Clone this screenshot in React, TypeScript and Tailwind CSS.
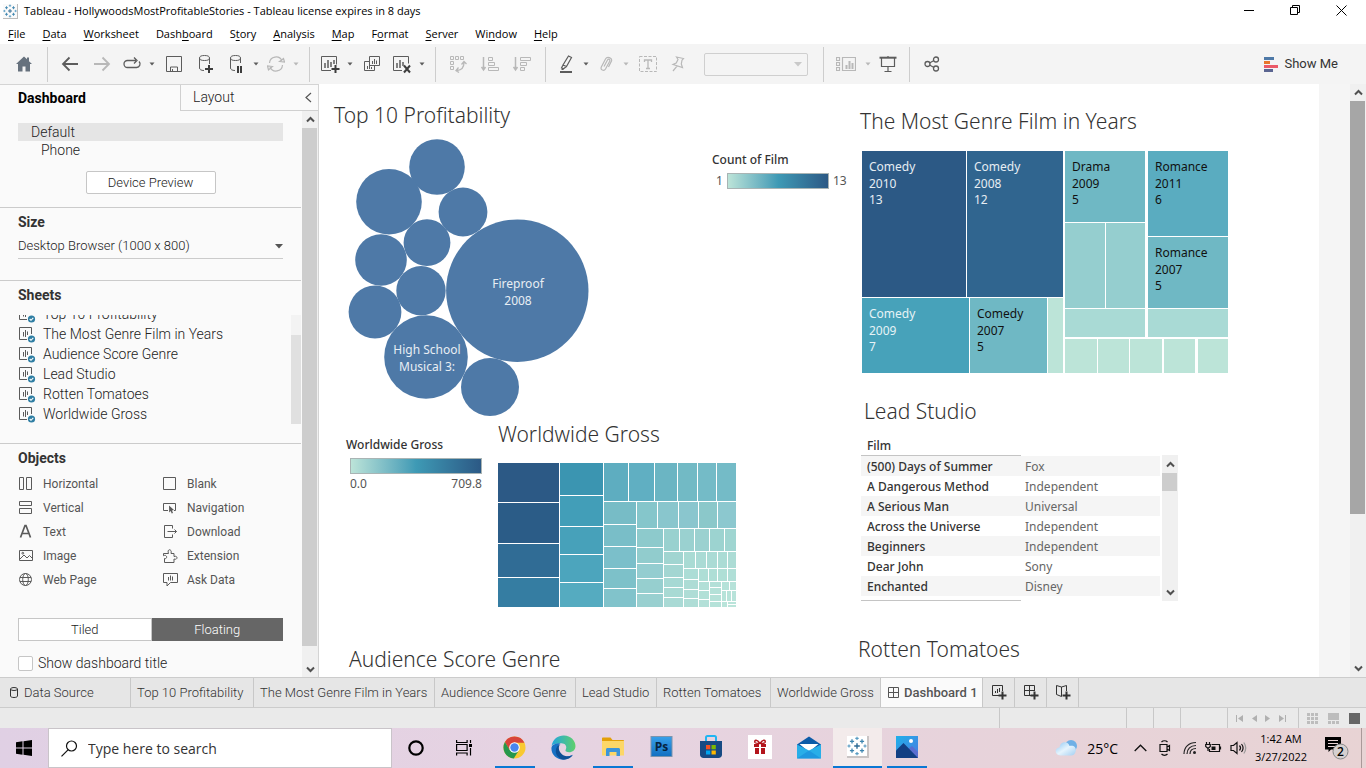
import React from 'react';
import type { ReactNode } from 'react';

const VIZ = "font-['Noto_Sans',sans-serif]";
const UI = "font-['Roboto',sans-serif]";
const SYS = "font-['Open_Sans',sans-serif]";

type Rect = [number, number, number, number, string];

/* ---------- small drawing helpers ---------- */

function Svg({ w = 20, h = 20, children, className = '' }: { w?: number; h?: number; children: ReactNode; className?: string }) {
  return (
    <svg width={w} height={h} viewBox={`0 0 ${w} ${h}`} fill="none" stroke="currentColor" strokeWidth="1" className={`shrink-0 ${className}`} aria-hidden="true">
      {children}
    </svg>
  );
}

const Caret = () => (
  <Svg w={6} h={4}>
    <path d="M0.500 0.500h5L3 3.500z" fill="currentColor" stroke="none" />
  </Svg>
);

function TableauMark({ size = 16 }: { size?: number }) {
  const plus = (x: number, y: number, r: number) => `M${x - r} ${y}h${2 * r}M${x} ${y - r}v${2 * r}`;
  return (
    <svg width={size} height={size} viewBox="0 0 20 20" fill="none" aria-hidden="true" className="shrink-0">
      <path d={plus(10, 10, 2.8)} stroke="#2d6a94" strokeWidth="1.4" />
      <path d={plus(5, 5.300, 2.100) + plus(15, 5.300, 2.100) + plus(5, 14.700, 2.100) + plus(15, 14.700, 2.100)} stroke="#3f86b0" strokeWidth="1.300" />
      <path d={plus(10, 2.400, 1.700) + plus(10, 17.600, 1.700) + plus(2, 10, 1.600) + plus(18, 10, 1.600)} stroke="#5a9cc2" strokeWidth="1.200" />
    </svg>
  );
}

/* ---------- toolbar ---------- */

function Tool({ label, wide = true, dim = false, children }: { label: string; wide?: boolean; dim?: boolean; children: ReactNode }) {
  return (
    <button aria-label={label} className={`flex h-8 shrink-0 items-center justify-center ${wide ? 'w-8' : 'w-7'} ${dim ? 'text-[#b8b8b8]' : 'text-[#5c5c5c]'}`}>
      {children}
    </button>
  );
}

const Drop = ({ label, dim = false }: { label: string; dim?: boolean }) => (
  <button aria-label={label} className={`flex h-8 w-3 shrink-0 items-center justify-center ${dim ? 'text-[#b8b8b8]' : 'text-[#5c5c5c]'}`}>
    <Caret />
  </button>
);

const Sep = () => <span className="ml-[7px] mr-1.5 h-[35px] w-px shrink-0 bg-[#cdcdcd]" />;

function Toolbar() {
  return (
    <div className="flex h-10 shrink-0 items-center bg-[#f4f4f4] pl-2 pr-7">
      <Tool label="Start page">
        <Svg w={18} h={18}>
          <path d="M9 1.500L1 9h2v7.500h4.500v-5h3v5H15V9h2l-3-2.800V2.500h-2v1.800z" fill="#66717d" stroke="none" />
        </Svg>
      </Tool>
      <Sep />
      <Tool label="Undo"><Svg w={18} h={16}><path d="M17 8H2M8.500 1.500L2 8l6.500 6.500" strokeWidth="1.800" /></Svg></Tool>
      <Tool label="Redo" dim><Svg w={18} h={16}><path d="M1 8h15M9.500 1.500L16 8l-6.500 6.500" strokeWidth="1.800" /></Svg></Tool>
      <Tool label="Replay" wide={false}>
        <Svg w={20} h={14}><path d="M9 3.500H5.500a3.500 3.500 0 0 0 0 7h9a3.500 3.500 0 0 0 2.500-6M7 3.500h7M12 0.500l3 3-3 3" strokeWidth="1.300" /></Svg>
      </Tool>
      <Drop label="Replay options" />
      <Tool label="Save"><Svg w={16} h={16}><path d="M.5.5h15v15H.5zM4.500 15.500v-4.500h7v4.500M6.500 13v2" /></Svg></Tool>
      <Tool label="New data source">
        <Svg w={18} h={20}>
          <ellipse cx="7.500" cy="4" rx="5" ry="2.500" /><path d="M2.500 4v10c0 1.400 1.500 2.500 4.500 2.500M12.500 4v6" /><path d="M12 11v8M8 15h8" strokeWidth="2" stroke="#3d3d3d" />
        </Svg>
      </Tool>
      <Tool label="Pause auto updates" wide={false}>
        <Svg w={18} h={20}>
          <ellipse cx="8.500" cy="4" rx="5" ry="2.500" /><path d="M3.500 4v10c0 1.400 1.500 2.500 4.500 2.500M13.500 4v5" /><path d="M11 12v7M14 12v7" strokeWidth="2" stroke="#3d3d3d" />
        </Svg>
      </Tool>
      <Drop label="Update options" />
      <Tool label="Run update" wide={false} dim>
        <Svg w={18} h={16}><path d="M2.500 7a6.500 6.500 0 0 1 12.500-2M15.500 9A6.500 6.500 0 0 1 3 11M12.500 5.500l5 .5-1-3.500zM5.500 10.500L.5 10l1 4z" strokeWidth="1.200" /></Svg>
      </Tool>
      <Drop label="Run options" dim />
      <Sep />
      <Tool label="New worksheet" wide={false}>
        <Svg w={20} h={20}>
          <path d="M11 16.500H1.500v-14h15v8" /><path d="M5 9v5M8 6v8M11 8v5M14 6v4" strokeWidth="1.500" /><path d="M15.500 11v8M11.500 15h8" strokeWidth="2" stroke="#3d3d3d" />
        </Svg>
      </Tool>
      <Drop label="New options" />
      <Tool label="Duplicate">
        <Svg w={18} h={18}>
          <path d="M6.500 1.500h10v9h-10zM6.500 6.500h-5v9h10v-5" /><path d="M9.500 6v3M11.500 4v5M13.500 5.500V9M4.500 11v3M6.500 9.500V14M8.500 12v2" />
        </Svg>
      </Tool>
      <Tool label="Clear sheet" wide={false}>
        <Svg w={20} h={20}>
          <path d="M10 16.500H1.500v-14h15v7" /><path d="M5 9v5M8 6v8M11 8v4" strokeWidth="1.500" /><path d="M12 11.500l6 7M18 11.500l-6 7" strokeWidth="2" stroke="#3d3d3d" />
        </Svg>
      </Tool>
      <Drop label="Clear options" />
      <Sep />
      <Tool label="Swap rows and columns" dim>
        <Svg w={18} h={18}>
          <path d="M1.500 1.500h3v3h-3zM6.500 1.500h3v3h-3zM11.500 1.500h3v3h-3zM1.500 6.500h3v3h-3zM1.500 11.500h3v3h-3z" /><path d="M15 7.500c0 5-2 7.500-7 8M12.500 9.500L15 6.500l2.500 2.500M9.500 12.500L7 15.500l3 2" strokeWidth="1.300" />
        </Svg>
      </Tool>
      <Tool label="Sort ascending" dim>
        <Svg w={18} h={16}><path d="M2.500 1v12M.5 11l2 3 2-3" strokeWidth="1.500" /><path d="M7.500 1.500h4v3h-4zM7.500 6.500h6v3h-6zM7.500 11.500h10v3h-10z" /></Svg>
      </Tool>
      <Tool label="Sort descending" dim>
        <Svg w={18} h={16}><path d="M2.500 1v12M.5 11l2 3 2-3" strokeWidth="1.500" /><path d="M7.500 1.500h10v3h-10zM7.500 6.500h6v3h-6zM7.500 11.500h4v3h-4z" /></Svg>
      </Tool>
      <Sep />
      <Tool label="Highlight" wide={false}>
        <Svg w={14} h={18}><path d="M9.500 1l3 1.500-5 9-3.500-1.500zM4 10l-1.500 3 2 .8L7.500 11.500M2.500 14.500h2" strokeWidth="1.200" /><path d="M1 17h12" strokeWidth="2" /></Svg>
      </Tool>
      <Drop label="Highlight options" />
      <Tool label="Group members" wide={false} dim>
        <Svg w={14} h={16}><path d="M5 10.500l3.500-6.500c.8-1.500 3-.5 2.200 1.200L6.500 13c-1.500 2.500-5.500 1-4.200-2L6.500 3c1.500-3 7-1.500 6 2L9.500 11" strokeWidth="1.200" /></Svg>
      </Tool>
      <Drop label="Group options" dim />
      <Tool label="Show mark labels" dim>
        <Svg w={18} h={16}><path d="M.5.5h17v15H.5z" strokeDasharray="3 1.500" /><path d="M5.500 6V4h7v2M9 4v8.500M7 12.500h4" strokeWidth="1.300" /></Svg>
      </Tool>
      <Tool label="Fix axes" wide={false} dim>
        <Svg w={14} h={16}><path d="M5.500 1l7 1.500-1.500 1.700-.7 3.800 1.200 3.500L2 8.500l3.200-1.500L7 3.500zM6 10.200L2 15" strokeWidth="1.200" /></Svg>
      </Tool>
      <div className="relative ml-3 flex shrink-0 items-center text-[#c9c9c9]">
        <select aria-label="Fit" disabled className="h-[23px] w-[104px] appearance-none rounded-xs border border-[#cfcfcf] bg-[#f4f4f4]" />
        <svg width="8" height="5" className="pointer-events-none absolute right-1.5" aria-hidden="true"><path d="M0 0h8L4 4.500z" fill="currentColor" /></svg>
      </div>
      <span className="w-2 shrink-0" />
      <Sep />
      <Tool label="Show cards" dim>
        <Svg w={20} h={16}><path d="M.5 1.500h3v3h-3zM.5 6.500h3v3h-3zM.5 11.500h3v3h-3zM6.500 1.500h13v13h-13z" strokeWidth="1.200" /><path d="M10.500 9v4M13.500 5v8M16.500 7v6" strokeWidth="2" /></Svg>
      </Tool>
      <Drop label="Card options" dim />
      <Tool label="Presentation mode" wide={false}>
        <Svg w={18} h={16}><path d="M.5 1.700h17" strokeWidth="2" /><path d="M2.500 2v8.500h13V2M9 10.500v4.500M5.500 15.500h7M9 0v1" strokeWidth="1.200" /></Svg>
      </Tool>
      <Sep />
      <Tool label="Share">
        <Svg w={16} h={16}><circle cx="3.500" cy="8" r="2.500" strokeWidth="1.300" /><circle cx="12" cy="3.500" r="2.500" strokeWidth="1.300" /><circle cx="12" cy="12.500" r="2.500" strokeWidth="1.300" /><path d="M5.500 7l4.500-2.500M5.500 9l4.500 2.500" strokeWidth="1.300" /></Svg>
      </Tool>
      <button className={`ml-auto flex items-center gap-1.5 text-[13px] text-[#333] ${UI}`}>
        <svg width="14" height="15" aria-hidden="true">
          <path d="M0 1.500h10" stroke="#4e79a7" strokeWidth="3" /><path d="M0 5.500h6" stroke="#e8762c" strokeWidth="3" />
          <path d="M0 9.500h14" stroke="#eb5a68" strokeWidth="3" /><path d="M0 13.500h9" stroke="#5b6591" strokeWidth="3" />
        </svg>
        Show Me
      </button>
    </div>
  );
}

/* ---------- sidebar ---------- */

const SheetIcon = () => (
  <Svg w={18} h={18} className="text-[#5a5a5a]">
    <path d="M9 14.500H1.500v-12h12V9" /><path d="M5.500 7v4.500M7.500 5v7M9.500 6.500V10" />
    <circle cx="13.500" cy="14" r="3.600" fill="#2f7ea3" stroke="none" /><path d="M11.700 14l1.300 1.300 2.300-2.500" stroke="#fff" strokeWidth="1.100" />
  </Svg>
);

const sheets = ['Top 10 Profitability', 'The Most Genre Film in Years', 'Audience Score Genre', 'Lead Studio', 'Rotten Tomatoes', 'Worldwide Gross'];

const objects: { name: string; icon: ReactNode }[] = [
  { name: 'Horizontal', icon: <path d="M1.500 1.500h4v12h-4zM8.500 1.500h5v12h-5z" /> },
  { name: 'Blank', icon: <path d="M1.500 1.500h12v12h-12z" /> },
  { name: 'Vertical', icon: <path d="M1.500 1.500h12v4h-12zM1.500 8.500h12v5h-12z" /> },
  { name: 'Navigation', icon: <><path d="M6 10.500H1.500v-7h12v7H12" /><path d="M7 5.500l5 4.500-2 .4 1 2.600-1.300.5-1-2.500-1.500 1.500z" fill="currentColor" stroke="none" /></> },
  { name: 'Text', icon: <path d="M2.500 13.500L7 1.500h1l4.500 12M4.200 9.500h6.600" strokeWidth="1.700" /> },
  { name: 'Download', icon: <path d="M10.500 4.500v-3h-8v12h8v-3M5.500 7.500h9M12.500 5.500l2 2-2 2" /> },
  { name: 'Image', icon: <><path d="M1.500 2.500h13v10h-13zM2 11l4-4 3 3 2.500-2.500 3 3" /><circle cx="4.800" cy="5.200" r=".9" /></> },
  { name: 'Extension', icon: <path d="M2.500 14.500v-4c3 1 3-4.500-1 -2.800V5.500h5C4.500 .5 10.500 .5 9 5.500h3v3c4-1.500 4 4 0 2.500v3.500z" /> },
  { name: 'Web Page', icon: <><circle cx="7.500" cy="7.500" r="6" /><ellipse cx="7.500" cy="7.500" rx="2.800" ry="6" /><path d="M2 5.500h11M2 9.500h11" /></> },
  { name: 'Ask Data', icon: <path d="M1.500 1.500h14v9h-7l-3.500 3.500v-3.500H1.500zM6.500 5v3.500M8.500 3.500v5M10.500 4.500v4" /> },
];

const H = ({ children }: { children: ReactNode }) => <h2 className="text-[14px] leading-5 font-bold text-[#333]">{children}</h2>;

function Arrow({ up = false }: { up?: boolean }) {
  return (
    <svg width="9" height="7" viewBox="0 0 9 7" fill="none" stroke="#505050" strokeWidth="2" aria-hidden="true">
      <path d={up ? 'M1 5.500l3.500-3.500L8 5.500' : 'M1 1.500L4.500 5 8 1.500'} />
    </svg>
  );
}

function Sidebar() {
  return (
    <aside className={`flex w-[319px] shrink-0 flex-col border-t border-r border-[#d4d4d4] bg-[#fafafa] font-light text-[#222] ${UI}`}>
      <div className="flex h-[26px] shrink-0">
        <button className="w-[180px] pl-[18px] text-left text-[14px] font-bold text-black">Dashboard</button>
        <button className="flex-1 border-b border-l border-[#d0d0d0] pl-3 text-left text-[14px]">Layout</button>
        <button aria-label="Collapse pane" className="flex w-5 items-center justify-center border-b border-[#d0d0d0]">
          <svg width="7" height="11" fill="none" stroke="#555" aria-hidden="true"><path d="M6 1L1 5.500 6 10" strokeWidth="1.200" /></svg>
        </button>
      </div>
      <div className="flex min-h-0 flex-1">
        <div className="mr-px flex min-w-0 flex-1 flex-col overflow-hidden">
          <section className="flex h-[97px] shrink-0 flex-col border-b border-[#cbcbcb] px-[18px] pt-3">
            <button className="h-[18px] bg-[#e5e5e5] pl-[13px] text-left text-[14px] leading-[18px]">Default</button>
            <button className="h-[18px] pl-[23px] text-left text-[14px] leading-[18px]">Phone</button>
            <button className="mt-3 h-[23px] w-[130px] self-center rounded-xs border border-[#c6c6c6] bg-white text-[13px]">Device Preview</button>
          </section>
          <section className="h-[73px] shrink-0 border-b border-[#cbcbcb] px-[18px] pt-1">
            <H>Size</H>
            <div className="relative mt-0.5 flex items-center">
              <select aria-label="Size" className="h-[25px] w-full appearance-none border-b border-[#cbcbcb] bg-transparent text-[13px] outline-none">
                <option>Desktop Browser (1000 x 800)</option>
              </select>
              <svg width="8" height="5" className="pointer-events-none absolute right-0" aria-hidden="true"><path d="M0 0h8L4 4.500z" fill="#555" /></svg>
            </div>
          </section>
          <section className="flex h-[163px] shrink-0 flex-col border-b border-[#cbcbcb] pl-[18px] pt-1">
            <H>Sheets</H>
            <div className="mt-2.5 flex h-[109px] overflow-hidden">
              <ul className="-mt-[11px] flex-1">
                {sheets.map((s) => (
                  <li key={s} className="flex h-5 items-center gap-[7px] text-[14px] leading-5"><SheetIcon />{s}</li>
                ))}
              </ul>
              <div className="w-2.5 bg-[#f3f3f3] pt-5"><div className="h-full bg-[#e0e0e0]" /></div>
            </div>
          </section>
          <section className="flex flex-1 flex-col px-[18px] pt-1">
            <H>Objects</H>
            <div className="mt-1 grid grid-cols-[144px_1fr]">
              {objects.map((o) => (
                <button key={o.name} className="flex h-6 items-center gap-2 text-left text-[12px] font-normal text-[#555]"><Svg w={17} h={16} className="text-[#5a5a5a]">{o.icon}</Svg>{o.name}</button>
              ))}
            </div>
            <div className="mt-[26px] flex h-[23px] shrink-0 text-[13px]">
              <button className="flex-1 border border-[#c6c6c6] bg-white">Tiled</button>
              <button className="flex-1 bg-[#666] text-white">Floating</button>
            </div>
            <label className="mt-3 flex items-center gap-[5px] text-[14px] leading-5">
              <input type="checkbox" className="size-[15px] appearance-none rounded-xs border border-[#c6c6c6] bg-white" />
              Show dashboard title
            </label>
          </section>
        </div>
        <div className="flex w-4 shrink-0 flex-col items-center bg-[#f0f0f0]">
          <span className="flex h-[17px] items-center"><Arrow up /></span>
          <span className="w-full flex-1 border-r border-[#f0f0f0] bg-[#cdcdcd]" />
          <span className="flex h-[31px] items-end pb-1"><Arrow /></span>
        </div>
      </div>
    </aside>
  );
}

/* ---------- charts ---------- */

const bubbles: [number, number, number][] = [
  [89, 28, 27.800], [41, 62.700, 32.800], [115, 73, 24.400], [79, 103.700, 23.400], [33, 121, 25.800],
  [73, 151.700, 24.700], [27, 173, 26.400], [169.300, 151.700, 71.200], [78, 218, 41.800], [142, 248, 29],
];

function Bubbles() {
  return (
    <svg width="242" height="278" role="img" aria-label="Top 10 profitability bubbles" className="shrink-0">
      {bubbles.map(([x, y, r]) => <circle key={`${x}-${y}`} cx={x} cy={y} r={r} fill="#4e79a7" />)}
      <g fill="#e8eef4" textAnchor="middle" className={`text-[12px] ${VIZ}`}>
        <text x="170" y="149">Fireproof</text>
        <text x="170" y="166">2008</text>
        <text x="79" y="215">High School</text>
        <text x="79" y="232">Musical 3:</text>
      </g>
    </svg>
  );
}

const gross: Rect[] = [
  [0, 0, 61, 39, '#2c5985'], [0, 40, 61, 80, '#2b5c87'], [0, 81, 61, 114, '#306c95'], [0, 115, 61, 144, '#357da2'],
  [62, 0, 105, 32, '#3b95b1'], [62, 33, 105, 63, '#429eb8'], [62, 64, 105, 91, '#47a1ba'], [62, 92, 105, 119, '#4ca5bd'], [62, 120, 105, 144, '#55abc0'],
  [106, 0, 130, 38, '#5eadc0'], [131, 0, 156, 38, '#60afc2'], [157, 0, 179, 38, '#6bb5c3'], [180, 0, 199, 38, '#72bac5'], [200, 0, 218, 38, '#74bbc7'], [219, 0, 238, 38, '#74bbc7'],
  [106, 39, 138, 61, '#77bcc6'], [106, 62, 138, 83, '#79bec8'], [106, 84, 138, 105, '#7bbfca'], [106, 106, 138, 125, '#7dc1c9'], [106, 126, 138, 144, '#81c3cb'],
  [139, 39, 159, 65, '#85c6cb'], [160, 39, 180, 65, '#89c6cd'], [181, 39, 200, 65, '#8ac6ce'], [201, 39, 219, 65, '#8bc8ca'], [220, 39, 238, 65, '#8cc8cf'],
  [139, 66, 165, 84, '#8dcacc'], [139, 85, 165, 100, '#91cccd'], [139, 101, 165, 115, '#94cdd0'], [139, 116, 165, 130, '#96cfcf'], [139, 131, 165, 144, '#99d0d0'],
  [166, 66, 181, 88, '#99d1cf'], [182, 66, 196, 88, '#9ad1d0'], [197, 66, 211, 88, '#9bd1d0'], [212, 66, 226, 88, '#9cd3d0'], [227, 66, 238, 88, '#9fd5d1'],
  [166, 89, 185, 101, '#a1d5d1'], [166, 102, 185, 114, '#a3d6d2'], [166, 115, 185, 124, '#a6d9d4'], [166, 125, 185, 134, '#a8dad4'], [166, 135, 185, 144, '#a9dad5'],
  [186, 89, 197, 105, '#a9dbd4'], [198, 89, 208, 105, '#aadbd5'], [209, 89, 219, 105, '#aadbd5'], [220, 89, 229, 105, '#abdcd5'], [230, 89, 238, 105, '#acdcd5'],
  [186, 106, 200, 116, '#acddd6'], [186, 117, 200, 126, '#addcd5'], [186, 127, 200, 135, '#aeddd6'], [186, 136, 200, 144, '#aeddd6'],
  [201, 106, 210, 118, '#aeded6'], [211, 106, 219, 118, '#aeded6'], [220, 106, 229, 118, '#afdfd6'], [230, 106, 238, 118, '#b0dfd7'],
  [201, 119, 211, 127, '#b1dfd7'], [201, 128, 211, 136, '#b2e0d7'], [201, 137, 211, 144, '#b3e0d8'],
  [212, 119, 223, 124, '#b3e0d8'], [212, 125, 223, 131, '#b4e1d8'], [212, 132, 223, 138, '#b5e1d8'], [212, 139, 223, 144, '#b5e2d9'],
  [224, 119, 231, 127, '#b5e2d9'], [232, 119, 238, 127, '#b6e2d9'], [224, 128, 228, 138, '#b7e3d9'], [229, 128, 233, 138, '#b7e3d9'], [234, 128, 238, 138, '#b8e3da'],
  [224, 139, 229, 144, '#b9e4da'], [230, 139, 238, 141, '#bae4da'], [230, 142, 238, 144, '#bbe5da'],
];

const genres: Rect[] = [
  [0, 0, 104, 146, '#2c5985'], [105, 0, 201, 146, '#30658f'], [0, 147, 107, 222, '#47a2ba'], [108, 147, 185, 222, '#6fb8c4'], [186, 147, 201, 222, '#bce4d8'],
  [203, 0, 283, 71, '#6fb8c4'], [203, 72, 243, 157, '#95cecf'], [244, 72, 283, 157, '#95cecf'], [286, 0, 366, 85, '#5aacc0'], [286, 86, 366, 157, '#6fb8c4'],
  [203, 158, 283, 186, '#a9dad5'], [286, 158, 366, 186, '#a9dad5'],
  [203, 188, 235, 222, '#bce4d8'], [236, 188, 267, 222, '#bce4d8'], [268, 188, 300, 222, '#bce4d8'], [302, 188, 333, 222, '#bce4d8'], [336, 188, 366, 222, '#bce4d8'],
];

const genreLabels: [number, number, string, string, string, string][] = [
  [7, 20, 'Comedy', '2010', '13', '#e6edf3'], [112, 20, 'Comedy', '2008', '12', '#e6edf3'], [7, 167, 'Comedy', '2009', '7', '#e6f3f6'],
  [115, 167, 'Comedy', '2007', '5', '#111'], [210, 20, 'Drama', '2009', '5', '#111'], [293, 20, 'Romance', '2011', '6', '#111'], [293, 106, 'Romance', '2007', '5', '#111'],
];

const Rects = ({ data }: { data: Rect[] }) => (
  <g shapeRendering="crispEdges">
    {data.map(([x, y, x2, y2, c]) => <rect key={`${x}-${y}`} x={x} y={y} width={x2 - x} height={y2 - y} fill={c} />)}
  </g>
);

function Legend({ title, low, high, below = false }: { title: string; low: string; high: string; below?: boolean }) {
  const ramp = <div className={`h-4 border border-[#a9b4b4] bg-linear-to-r from-[#bce4d8] via-[#3e9ab5] to-[#2c5985] ${below ? 'ml-1 w-[132px]' : 'w-[102px]'}`} />;
  return (
    <div className={`text-[12px] leading-4 text-[#555] ${VIZ}`}>
      <div className="font-medium text-[#333]">{title}</div>
      {below ? (
        <div className="mt-[5px]">{ramp}<div className="mt-0.5 ml-1 flex w-[132px] justify-between"><span>{low}</span><span>{high}</span></div></div>
      ) : (
        <div className="mt-[5px] flex items-center gap-1 pl-1"><span>{low}</span>{ramp}<span>{high}</span></div>
      )}
    </div>
  );
}

const films = [
  ['(500) Days of Summer', 'Fox'], ['A Dangerous Method', 'Independent'], ['A Serious Man', 'Universal'], ['Across the Universe', 'Independent'],
  ['Beginners', 'Independent'], ['Dear John', 'Sony'], ['Enchanted', 'Disney'],
];

const Title = ({ children }: { children: ReactNode }) => <h3 className="text-[21px] leading-6 font-light whitespace-nowrap text-[#333]">{children}</h3>;

function Canvas() {
  return (
    <main className={`flex min-w-0 flex-1 overflow-hidden bg-white ${VIZ}`}>
      <div className="flex w-[539px] shrink-0 flex-col">
        <div className="flex h-[338px] pl-[15px] pt-[19px]">
          <section className="w-[378px] shrink-0">
            <Title>Top 10 Profitability</Title>
            <div className="pl-3.5 pt-3"><Bubbles /></div>
          </section>
          <div className="pt-[49px]"><Legend title="Count of Film" low="1" high="13" /></div>
        </div>
        <div className="flex h-[225px] shrink-0 pl-[27px]">
          <div className="w-[152px] shrink-0 pt-[15px]"><Legend title="Worldwide Gross" low="0.0" high="709.8" below /></div>
          <section>
            <Title>Worldwide Gross</Title>
            <svg width="238" height="144" role="img" aria-label="Worldwide gross treemap" className="mt-[17px]"><Rects data={gross} /></svg>
          </section>
        </div>
        <div className="pl-[30px]"><Title>Audience Score Genre</Title></div>
      </div>
      <div className="flex min-w-0 flex-1 flex-col pt-[25px]">
        <div className="pl-0.5"><Title>The Most Genre Film in Years</Title></div>
        <svg width="366" height="222" role="img" aria-label="Genre treemap" className="mt-[18px] ml-1 shrink-0">
          <Rects data={genres} />
          {genreLabels.map(([x, y, a, b, c, fill]) => (
            <g key={a + b} fill={fill} className="text-[12px]">
              <text x={x} y={y}>{a}</text><text x={x} y={y + 17}>{b}</text><text x={x} y={y + 33}>{c}</text>
            </g>
          ))}
        </svg>
        <div className="mt-[26px] pl-1.5"><Title>Lead Studio</Title></div>
        <div className="mt-3 flex gap-0.5 pl-[3px] text-[12px]">
          <div className="w-[299px] shrink-0">
            <table className="w-full border-collapse text-left">
              <thead>
                <tr className="h-5">
                  <th className="w-40 border-b border-[#c4c4c4] pt-0.5 pl-1.5 font-medium text-[#333]">Film</th>
                  <th aria-label="Studio" />
                </tr>
              </thead>
              <tbody>
                {films.map(([f, s]) => (
                  <tr key={f} className="h-5 odd:bg-[#f5f5f5]">
                    <th className="pt-0.5 pl-1.5 leading-4 font-medium whitespace-nowrap text-[#333]">{f}</th>
                    <td className="pt-0.5 pl-1 leading-4 text-[#666]">{s}</td>
                  </tr>
                ))}
              </tbody>
            </table>
            <div className="h-[5px] w-40 border-b border-[#c4c4c4]" />
          </div>
          <div className="mt-5 flex w-4 shrink-0 flex-col items-center bg-[#f0f0f0]">
            <span className="flex h-[18px] items-center"><Arrow up /></span>
            <span className="h-[18px] w-full border-r border-[#f0f0f0] bg-[#cdcdcd]" />
            <span className="mt-auto flex h-[17px] items-center"><Arrow /></span>
          </div>
        </div>
        <div className="mt-9"><Title>Rotten Tomatoes</Title></div>
      </div>
      <div className="w-[31px] shrink-0 bg-[#f5f5f5]" />
      <div className="flex w-4 shrink-0 flex-col items-center bg-[#f0f0f0]">
        <span className="flex h-[17px] items-center"><Arrow up /></span>
        <span className="h-[413px] w-full border-r border-[#f0f0f0] bg-[#a6a6a6]" />
        <span className="mt-auto flex h-[17px] items-center"><Arrow /></span>
      </div>
    </main>
  );
}

/* ---------- sheet tabs and status ---------- */

function SheetTabs() {
  const tab = 'h-full shrink-0 border-r border-[#c8c8c8] pl-1.5 text-left whitespace-nowrap';
  return (
    <nav className={`flex h-[31px] shrink-0 border-y border-[#cccccc] bg-[#e6e6e6] text-[13px] font-light text-[#333] ${UI}`}>
      <button className={`${tab} flex w-[131px] items-center gap-1`}>
        <Svg w={13} h={13} className="ml-px"><ellipse cx="7" cy="3" rx="3.500" ry="1.500" /><path d="M3.500 3v7c0 2 7 2 7 0V3" /></Svg>
        Data Source
      </button>
      <button className={`${tab} w-[123px]`}>Top 10 Profitability</button>
      <button className={`${tab} w-[181px]`}>The Most Genre Film in Years</button>
      <button className={`${tab} w-[141px]`}>Audience Score Genre</button>
      <button className={`${tab} w-[81px]`}>Lead Studio</button>
      <button className={`${tab} w-[114px]`}>Rotten Tomatoes</button>
      <button className={`${tab} w-[110px]`}>Worldwide Gross</button>
      <button className={`${tab} flex w-[102px] items-center gap-1 bg-[#fafafa] font-medium text-[#555]`}>
        <Svg w={13} h={13}><path d="M1.500 1.500h10v10h-10zM6.500 1.500v10M1.500 6.500h10" /></Svg>
        Dashboard 1
      </button>
      <button aria-label="New worksheet" className={`${tab} w-8 pl-2`}>
        <Svg w={17} h={17}><path d="M8 11.500H1.500v-10h10V7M4.500 7v2M6.500 5v4M8.500 4v4" /><path d="M11.500 7.500v8M7.500 11.500h8" strokeWidth="2" /></Svg>
      </button>
      <button aria-label="New dashboard" className={`${tab} w-8 pl-2`}>
        <Svg w={17} h={17}><path d="M8 11.500H1.500v-10h10V7M1.500 6.500h10M6.500 1.500v10" /><path d="M11.500 7.500v8M7.500 11.500h8" strokeWidth="2" /></Svg>
      </button>
      <button aria-label="New story" className={`${tab} w-8 pl-2`}>
        <Svg w={17} h={17}><path d="M6.500 3v9.500l-5-2v-9l5 1.500 5-1.500V7" /><path d="M11.500 7.500v8M7.500 11.500h8" strokeWidth="2" /></Svg>
      </button>
    </nav>
  );
}

function StatusBar() {
  const cell = 'h-full shrink-0 border-l border-[#c8c8c8]';
  return (
    <footer className="flex h-5 shrink-0 justify-end bg-[#eaeaea]">
      <span className={`${cell} w-[127px]`} /><span className={`${cell} w-[27px]`} /><span className={`${cell} w-[27px]`} /><span className={`${cell} w-[47px]`} />
      <div className={`${cell} flex w-[71px] items-center justify-around pr-2 pl-1 text-[#b0b0b0]`}>
        <button aria-label="First"><svg width="7" height="7" className="block"><path d="M0 0h1v7H0zM7 0v7L2 3.500z" fill="currentColor" /></svg></button>
        <button aria-label="Previous"><svg width="5" height="7" className="block"><path d="M5 0v7L0 3.500z" fill="currentColor" /></svg></button>
        <button aria-label="Next"><svg width="5" height="7" className="block"><path d="M0 0v7l5-3.500z" fill="currentColor" /></svg></button>
        <button aria-label="Last"><svg width="7" height="7" className="block"><path d="M6 0h1v7H6zM0 0v7l5-3.500z" fill="currentColor" /></svg></button>
      </div>
      <div className={`${cell} flex w-[68px] items-center gap-2.5 pl-2 text-[#bdbdbd]`}>
        <button aria-label="Sheet sorter"><svg width="11" height="11" className="block"><path d="M0 0h3v3H0zM4 0h3v3H4zM8 0h3v3H8zM0 4h3v3H0zM4 4h3v3H4zM8 4h3v3H8zM0 8h3v3H0zM4 8h3v3H4zM8 8h3v3H8z" fill="currentColor" /></svg></button>
        <button aria-label="Filmstrip"><svg width="11" height="11" className="block"><path d="M0 0h11v7H0zM0 8h3v3H0zM4 8h3v3H4zM8 8h3v3H8z" fill="currentColor" /></svg></button>
        <button aria-label="Tabs"><svg width="11" height="11" className="block"><path d="M0 0h11v11H0z" fill="#666" /></svg></button>
      </div>
    </footer>
  );
}

/* ---------- desktop taskbar ---------- */

function App24({ label, open = false, active = false, children }: { label: string; open?: boolean; active?: boolean; children: ReactNode }) {
  return (
    <button aria-label={label} className={`flex w-[49px] shrink-0 flex-col items-center ${active ? 'bg-[#f3ebeb]' : ''}`}>
      <span className="flex flex-1 items-center">{children}</span>
      <span className={`h-0.5 ${active ? 'w-full' : 'w-10'} ${open || active ? 'bg-[#0a78d4]' : ''}`} />
    </button>
  );
}

function Taskbar() {
  return (
    <div className={`flex h-10 shrink-0 bg-linear-to-r from-[#e0d0e4] via-[#e6d3e2] via-40% to-[#e8d3d4] text-black ${SYS}`}>
      <button aria-label="Start" className="flex w-12 shrink-0 items-center justify-center">
        <svg width="16" height="16" className="block"><path d="M0 2.200L6.500 1.300V7.500H0zM7.500 1.200L16 0v7.500H7.500zM0 8.500h6.500v6.200L0 13.800zM7.500 8.500H16V16l-8.500-1.200z" /></svg>
      </button>
      <label className="flex w-[344px] shrink-0 items-center gap-2.5 border border-[#c9c4c9] bg-white pl-3">
        <svg width="17" height="17" fill="none" stroke="#111" strokeWidth="1.200" className="shrink-0" aria-hidden="true"><circle cx="10.500" cy="6" r="5" /><path d="M7 9.800L.5 16.300" /></svg>
        <input aria-label="Search" placeholder="Type here to search" className="min-w-0 flex-1 bg-transparent text-[14px] outline-none placeholder:text-[#333]" />
      </label>
      <button aria-label="Cortana" className="flex w-12 shrink-0 items-center justify-center"><svg width="16" height="16"><circle cx="8" cy="8" r="6.700" fill="none" stroke="#000" strokeWidth="2.200" /></svg></button>
      <button aria-label="Task view" className="flex w-12 shrink-0 items-center justify-center">
        <svg width="17" height="16" fill="none" stroke="#000" strokeWidth="1.200"><path d="M.6 0v2.500h10.500V0M.6 4.500h10.500v6H.6zM.6 15.500V13h10.500v2.500M14.500 0v3M14.500 8v7.500" /><path d="M13 4h3v3h-3z" fill="#000" stroke="none" /></svg>
      </button>
      <div className="ml-[2px] flex">
        <App24 label="Chrome" open>
          <svg width="23" height="23" viewBox="0 0 24 24"><circle cx="12" cy="12" r="11.500" fill="#f9c932" /><path d="M12 .5A11.500 11.500 0 0 0 2 6.300L6.800 14.500 12 7h10.300A11.500 11.500 0 0 0 12 .5z" fill="#d8443a" /><path d="M2 6.300a11.500 11.500 0 0 0 9.200 17.200L16.500 15 7 14.500z" fill="#26974d" /><circle cx="12" cy="12" r="5.500" fill="#fff" /><circle cx="12" cy="12" r="4.400" fill="#4a86ee" /></svg>
        </App24>
        <App24 label="Edge">
          <svg width="25" height="25" viewBox="0 0 24 24">
            <defs><linearGradient id="eg" x1="0" x2="1"><stop offset="0" stopColor="#23a6de" /><stop offset="1" stopColor="#5fd06b" /></linearGradient></defs>
            <path d="M.5 10.500C2 3.500 7 .3 12.500.5 19 .8 23.500 5.500 23.500 10.500c0 4-3 6-6 6-2.500 0-4.200-1-3.500-2.200 2-3.500-.5-6.300-4-6.300C5.500 8 1.500 9 .5 10.500z" fill="url(#eg)" />
            <path d="M.4 13C.4 9 5 7.800 9 8 6.500 9.500 6.200 13 7.500 16c2 4.500 8 6 13.500 3-2 3-5 4.700-9 4.700C5.500 23.700.4 19 .4 13z" fill="#1871c4" />
            <path d="M9.500 8.500c-3 2-2.500 7 1 10 3 2.500 7.500 2.500 10.500.5-3 5-10 6-14 2-4-3.500-3-10.500 2.500-12.500z" fill="#0d4f96" />
          </svg>
        </App24>
        <App24 label="File Explorer" open>
          <svg width="22" height="20"><path d="M0 1.500C0 .7.500.5 1 .5h7.500l2 2.500H21c.6 0 1 .4 1 1V18H0z" fill="#e3a008" /><path d="M0 4h22v14.500H0z" fill="#fcd768" /><path d="M4 19v-6.500c0-1 .7-1.500 1.500-1.500h11c.8 0 1.500.5 1.500 1.500V19h-3.500v-4h-7v4z" fill="#3d95d9" /></svg>
        </App24>
        <App24 label="Photoshop">
          <svg width="23" height="22"><defs><linearGradient id="ps" x2="0" y2="1"><stop stopColor="#38a0ea" /><stop offset="1" stopColor="#126fc0" /></linearGradient></defs><rect x="1" y=".5" width="21" height="20" fill="url(#ps)" stroke="#7c94ad" /><text x="11.500" y="15" textAnchor="middle" fill="#06233d" fontSize="12" fontWeight="700">Ps</text></svg>
        </App24>
        <App24 label="Store">
          <svg width="24" height="24"><path d="M7 7V2.500C7 1.500 7.500 1 8.500 1h7c1 0 1.500.5 1.500 1.500V7" fill="none" stroke="#20b5f2" strokeWidth="2" /><path d="M1 6h22v13.500c0 2-1.500 3.500-3.500 3.500h-15C2.500 23 1 21.500 1 19.500z" fill="#174a83" /><path d="M7 10h4.300v4.300H7z" fill="#f25022" /><path d="M12.500 10h4.300v4.300h-4.300z" fill="#7fba00" /><path d="M7 15.500h4.300v4H7z" fill="#00a4ef" /><path d="M12.500 15.500h4.300v4h-4.300z" fill="#ffb900" /></svg>
        </App24>
        <App24 label="Rewards">
          <svg width="24" height="24"><path d="M0 0h24v24H0z" fill="#fff" /><path d="M6 9h5v3H6zM13 9h5v3h-5zM7 13h4v6H7zM13 13h4v6h-4z" fill="#b3151c" /><path d="M12 8.500C9 3.500 6 5 7 7.500c.5 1 3 1 5 1zm0 0c3-5 6-3.500 5-1-.5 1-3 1-5 1z" fill="none" stroke="#b3151c" strokeWidth="1.500" /></svg>
        </App24>
        <App24 label="Mail">
          <svg width="24" height="23"><path d="M0 8.500L12 .5l12 8V14H0z" fill="#0c5ba8" /><path d="M2.500 8h19L12 16z" fill="#fff" /><path d="M0 8.500l12 6 12-6v14H0z" fill="#28aee8" /><path d="M0 22.500l12-8 12 8z" fill="#1788d8" opacity=".6" /></svg>
        </App24>
        <App24 label="Tableau" active>
          <span className="flex size-[22px] items-center justify-center border-r-2 border-b-2 border-[#c9c4c4] bg-white"><TableauMark size={20} /></span>
        </App24>
        <App24 label="Photos" open>
          <svg width="22" height="22"><defs><linearGradient id="ph" x2="1" y2="1"><stop stopColor="#1fb0ea" /><stop offset="1" stopColor="#4c7be0" /></linearGradient></defs><path d="M0 0h22v22H0z" fill="url(#ph)" /><path d="M11 14l5-4 6 6v6H11z" fill="#5a6ed0" /><path d="M0 14.500L7.500 7 22 22H0z" fill="#123f83" /><circle cx="15" cy="5" r="2" fill="#fff" /></svg>
        </App24>
      </div>
      <div className="ml-auto flex items-center">
        <button className="flex items-center gap-2 text-[14px]">
          <svg width="24" height="18"><defs><linearGradient id="cl" x2="1" y2="1"><stop stopColor="#8cc6f3" /><stop offset=".5" stopColor="#e6f4fd" /><stop offset="1" stopColor="#a3cff2" /></linearGradient></defs><circle cx="16" cy="7" r="6" fill="#6fb0e6" /><path d="M5.500 16.500C-1 16-.5 8.500 4.500 8.500 5 2 13.500 1.500 14.500 7c6-1 7 3 6 6-.7 2.500-2.500 3.500-4.500 3.500z" fill="url(#cl)" /></svg>
          25°C
        </button>
        <button aria-label="Hidden icons" className="ml-4"><svg width="13" height="8" fill="none" stroke="#111" strokeWidth="1.300" className="block"><path d="M.7 7l5.800-5.800L12.300 7" /></svg></button>
        <button aria-label="Meet now" className="ml-3"><svg width="12" height="16" fill="none" stroke="#111" strokeWidth="1.200" className="block"><path d="M2.500 2C4 .3 7 .3 8.500 2M2.500 14C4 15.700 7 15.700 8.500 14M1 4.500h7v7H1zM8 7l2.500-1.500v5L8 9" /></svg></button>
        <button aria-label="Network" className="ml-3"><svg width="14" height="14" fill="none" stroke="#222" strokeWidth="1.200" className="block"><path d="M1 13C1 6 6 1.500 13 1.500M4 13c0-5 3.500-8.500 9-8.500M7 13c0-3 2-5.500 6-5.500" /><circle cx="11.500" cy="11.500" r="1.500" fill="#222" stroke="none" /></svg></button>
        <button aria-label="Battery" className="ml-2"><svg width="17" height="14" fill="none" stroke="#111" strokeWidth="1.200" className="block"><path d="M6.500 3.500h8v7h-10V8M15.500 5.500v3M1.500 1v2.500M4.500 1v2.500M.7 3.500h4.600v2L3 7.500.7 5.500zM3 7.500V10" /><path d="M6.500 5.500h4v3.500h-4z" fill="#111" stroke="none" /></svg></button>
        <button aria-label="Volume" className="ml-2"><svg width="17" height="14" fill="none" stroke="#111" strokeWidth="1.200" className="block"><path d="M1 4.500h2.500L7 1.500v11L3.500 9.500H1zM9.500 4.500c1.300 1.500 1.300 3.500 0 5M11.500 3c2 2.500 2 5.500 0 8" /><path d="M13.800 1.500c2.500 3.500 2.500 7.500 0 11" stroke="#999" /></svg></button>
        <button className="ml-1.5 flex w-[56px] flex-col items-center text-[11px] leading-[18px]"><span>1:42 AM</span><span>3/27/2022</span></button>
        <button aria-label="Notifications" className="ml-4"><svg width="24" height="24" className="block"><path d="M0 1h16v12.500H6L3.500 16v-2.500H0z" /><path d="M3 4.500h10M3 7.500h10M3 10.500h7" stroke="#e8d3d4" /><circle cx="15.500" cy="15.500" r="7.500" fill="#d6d0d0" stroke="#888" /><text x="15.500" y="20" textAnchor="middle" fontSize="12" fontWeight="600">2</text></svg></button>
        <span className="ml-3 h-10 w-[5px] border-l border-[#a99]" />
      </div>
    </div>
  );
}

/* ---------- window ---------- */

const menus: [string, string, string][] = [
  ['', 'F', 'ile'], ['', 'D', 'ata'], ['', 'W', 'orksheet'], ['Dash', 'b', 'oard'], ['S', 't', 'ory'], ['', 'A', 'nalysis'],
  ['', 'M', 'ap'], ['F', 'o', 'rmat'], ['', 'S', 'erver'], ['Wi', 'n', 'dow'], ['', 'H', 'elp'],
];

export default function App() {
  return (
    <div className="flex h-screen flex-col overflow-hidden bg-white">
      <header className={`shrink-0 text-[11px] text-black ${SYS}`}>
        <div className="flex h-[23px] items-center pr-0.5">
          <span className="ml-[3px] mr-1.5 flex size-[15px] items-center justify-center border-r border-b border-[#bbb] bg-[#fafafa]"><TableauMark size={14} /></span>
          <h1 className="whitespace-nowrap">Tableau - HollywoodsMostProfitableStories - Tableau license expires in 8 days</h1>
          <div className="ml-auto flex h-5 self-start">
            <button aria-label="Minimize" className="flex w-[46px] items-center justify-center"><svg width="10" height="10"><path d="M0 5.500h10" stroke="#000" /></svg></button>
            <button aria-label="Restore" className="flex w-[46px] items-center justify-center"><svg width="10" height="10" fill="none" stroke="#000"><path d="M.5 2.500h7v7h-7zM2.500 2.500v-2h7v7h-2" /></svg></button>
            <button aria-label="Close" className="flex w-[46px] items-center justify-center"><svg width="11" height="11" stroke="#000"><path d="M.5.5l10 10M10.500.5l-10 10" /></svg></button>
          </div>
        </div>
        <nav className="flex h-[21px] items-center gap-[17px] pl-2">
          {menus.map(([a, u, b]) => (
            <button key={a + u + b} className="leading-5">{a}<span className="underline underline-offset-2">{u}</span>{b}</button>
          ))}
        </nav>
      </header>
      <Toolbar />
      <div className="flex min-h-0 flex-1">
        <Sidebar />
        <Canvas />
      </div>
      <SheetTabs />
      <StatusBar />
      <Taskbar />
    </div>
  );
}
